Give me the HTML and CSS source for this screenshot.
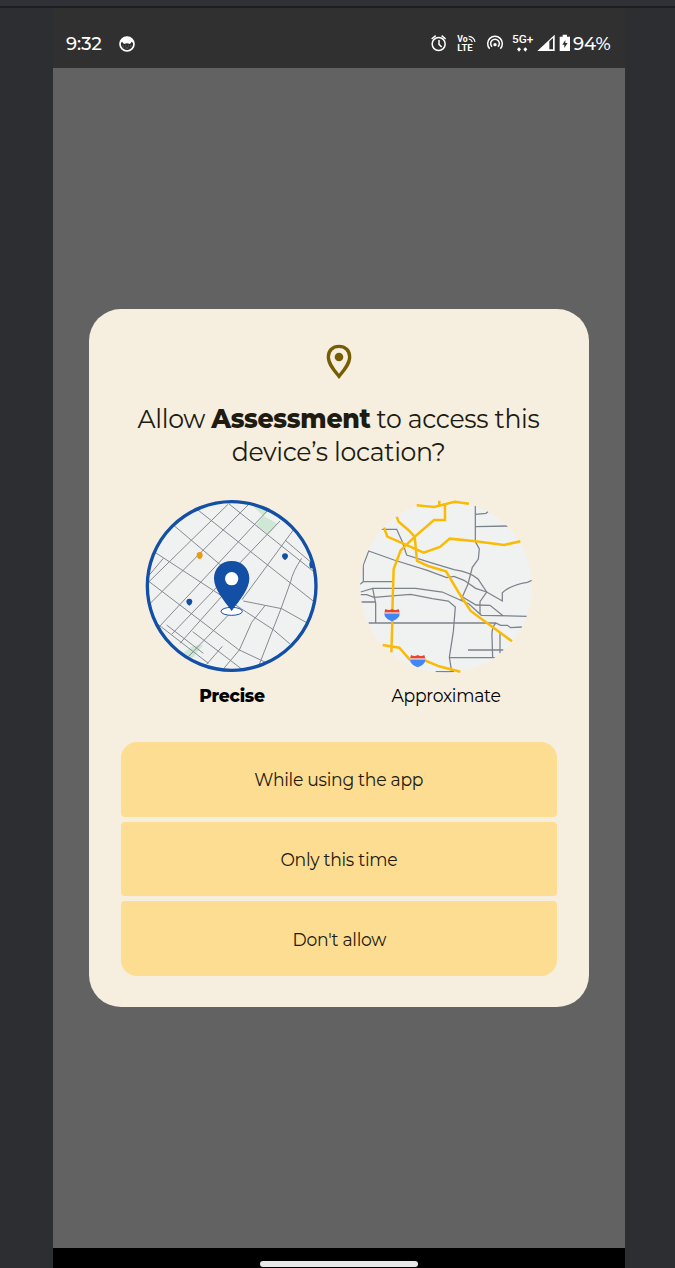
FILE: index.html
```html
<!DOCTYPE html>
<html lang="en">
<head>
<meta charset="utf-8">
<title>Location permission</title>
<link rel="stylesheet" href="styles.css">
</head>
<body>
<div class="phone">
  <header class="status">
    <span class="time">9:32</span>
    <svg class="cat" width="18" height="18" viewBox="0 0 54 54"><circle cx="27" cy="27" r="21" fill="#303030" stroke="#fff" stroke-width="5"/><path d="M8 25Q10 6 27 5Q44 6 46 25L41 20L36 27Q27 23 18 27L12 20Z" fill="#fff"/><path d="M14 33h3M37 33h3M14 39h3M21 33h2M31 33h2M25 39h4" stroke="#888" stroke-width="3"/></svg>
    <div class="icons">
      <svg width="18" height="20" viewBox="29 42 54 60" fill="none" stroke="#fff" stroke-width="4.5"><circle cx="55" cy="72" r="19.5"/><path d="M56 60v13l8 8M34 57l12-10M64 47l12 10"/></svg>
      <svg class="volte" width="20" height="20" viewBox="112 42 60 60"><text x="113" y="66" class="tiny" textLength="31" lengthAdjust="spacingAndGlyphs">Vo</text><text x="113" y="92" class="tiny" textLength="46" lengthAdjust="spacingAndGlyphs">LTE</text><path d="M147 49Q163 50 166 66M147 57Q155 58 158 66" fill="none" stroke="#fff" stroke-width="3.5"/></svg>
      <svg class="hotspot" width="18" height="20" viewBox="198 42 54 60" fill="none" stroke="#fff" stroke-width="4.5"><path d="M209 86A22 22 0 1 1 241 86M216 80A13 13 0 1 1 234 80"/><circle cx="225" cy="74" r="5" fill="#fff" stroke="none"/></svg>
      <svg class="net" width="22" height="24" viewBox="278 36 66 72"><text x="278" y="70" class="five" textLength="64" lengthAdjust="spacingAndGlyphs">5G+</text><path d="M293 88l6-6 6 6-6 7zM312 88l6-6 6 6-6 7z" fill="#fff"/></svg>
      <svg class="signal" width="18" height="20" viewBox="350 42 54 60"><path d="M351 93L403 44V93Z" fill="#fff"/><path d="M387 64L398 54V88H387Z" fill="#303030"/></svg>
      <svg class="battery" width="12" height="20" viewBox="419 42 36 60"><path d="M430 44h13v6h9v43h-31V50h9z" fill="#fff"/><path d="M438 60l-9 14h6v10l10-15h-7z" fill="#303030"/></svg>
      <span class="pct">94%</span>
    </div>
  </header>
  <main class="scrim">
    <section class="card">
      <svg class="pin" width="26" height="36" viewBox="0 0 78 108"><path d="M39 7C20 7 7 20 7 39C7 60 25 80 39 97C53 80 71 60 71 39C71 20 58 7 39 7Z" fill="none" stroke="#765d00" stroke-width="10"/><circle cx="39" cy="39" r="13" fill="#765d00"/></svg>
      <h1>Allow <b>Assessment</b> to access this<br>device’s location?</h1>
      <div class="maps">
        <figure>
          <svg width="184" height="184" viewBox="0 0 552 552">
            <defs><clipPath id="c1"><circle cx="275" cy="273" r="254"/></clipPath></defs>
            <g clip-path="url(#c1)">
              <rect width="552" height="552" fill="#f0f2f1"/>
              <path d="M340 36Q365 36 384 50L370 62L412 86L386 118L348 90L370 62ZM130 475Q155 447 190 450L155 492Z" fill="#cee8d5"/>
              <g fill="none" stroke="#868990" stroke-width="3">
                <path d="M170 42L522 320M266 26L525 233M100 90L250 217M45 172L400 404L450 447M25 258L296 464L385 506M50 385L205 505M80 390L190 475M158 410L305 522M310 318L425 341L500 383M435 135L520 208"/>
                <path d="M264 28L25 262M324 30L30 326M384 45L58 395M420 78L95 418M460 105L306 314M262 285L120 445M275 350L145 485M247 454L200 508M375 332L335 382L298 465L250 522M485 190Q458 230 452 260L423 341L398 405L358 508M70 190L28 240"/>
              </g>
              <ellipse cx="515" cy="209" rx="7" ry="11" fill="#124fa5"/>
            </g>
            <circle cx="275" cy="273" r="253" fill="none" stroke="#124fa5" stroke-width="10"/>
            <path d="M170 181a9 10 0 1 1 18 0q0 8-9 12q-9-4-9-12" fill="#ef990c"/>
            <path d="M426 184a9 9 0 1 1 18 0q0 7-9 12q-9-5-9-12M139 320a9 9 0 1 1 18 0q0 7-9 12q-9-5-9-12" fill="#124fa5"/>
            <ellipse cx="275" cy="349" rx="32" ry="12" fill="#fff" stroke="#124fa5" stroke-width="3"/>
            <path d="M275 198C244 198 222 220 222 250C222 282 249 313 275 348C301 313 328 282 328 250C328 220 306 198 275 198Z" fill="#124fa5"/><circle cx="275" cy="251" r="20" fill="#fff"/>
          </svg>
          <figcaption class="precise">Precise</figcaption>
        </figure>
        <figure>
          <svg width="184" height="184" viewBox="0 0 552 552">
            <defs><clipPath id="c2"><circle cx="276" cy="275" r="258"/></clipPath></defs>
            <circle cx="276" cy="275" r="258" fill="#f0f2f1"/>
            <g clip-path="url(#c2)" fill="none" stroke="#7d838b" stroke-width="3.8">
              <path d="M364 30V140L376 162L373 192L355 217L342 267L320 317M364 58L396 55L404 48M364 95L463 93M82 103H128L144 138L158 180L230 203L300 224Q350 232 372 252L398 291L378 320V358"/>
              <path d="M28 260V210L44 168L120 195L220 226L278 248L300 244L330 256L365 280L398 291L445 318V293Q470 270 520 262L534 256M18 268L28 260H116M20 291L56 280H185L265 291L345 327L382 361L520 364M20 299H38L60 307L170 298L235 311L283 318L304 336L298 410L286 487L293 530M56 280L65 325V383M22 321H64M44 384H425L440 391L460 391L470 398L505 396M425 384Q412 400 414 425L416 490M438 413V475M342 465H448M286 488H424M325 305L366 330L408 331L447 362M245 530H300"/>
            </g>
            <g fill="none" stroke="#fabb05" stroke-width="7.5">
              <path d="M188 31L240 36L302 20L345 26M256 17V32M273 30V75H240L180 127L140 166L119 222L115 350V383L112 472M128 65L134 80L163 105L182 125L189 198L222 213L276 229L313 291L350 348L474 439M90 98L100 125L153 148L209 173L258 156L287 131L365 139L450 150L499 139M86 450L136 458L169 496M210 495L255 514L319 530"/>
            </g>
            <g id="shield"><path d="M91 354H137Q138 370 114 379Q90 370 91 354Z" fill="#4285f4"/><path d="M91 353L94 342Q105 348 114 342Q124 348 134 342L137 353Z" fill="#ea4335"/><path d="M91 354H137" stroke="#f5efe4" stroke-width="3"/></g>
            <use href="#shield" x="77" y="138"/>
          </svg>
          <figcaption>Approximate</figcaption>
        </figure>
      </div>
      <div class="actions">
        <button><span class="label">While using the app</span></button>
        <button><span class="label">Only this time</span></button>
        <button><span class="label">Don't allow</span></button>
      </div>
    </section>
  </main>
  <footer class="nav"><div class="handle"></div></footer>
</div>
</body>
</html>
```
FILE: styles.css
```css
* { box-sizing: border-box; }
body { margin: 0; height: 1268px; background: #2d2e32; border-top: 6px solid #303136; font-family: Montserrat, Lato, "Open Sans", sans-serif; overflow: hidden; }
.phone { width: 100%; height: 1262px; padding: 0 50px 0 53px; border-top: 2px solid #1d1e20; display: flex; flex-direction: column; }
.status { height: 60px; flex: none; background: #303030; color: #fff; display: flex; align-items: center; padding: 11px 14px 0 13px; }
.time { font-size: 18px; font-weight: 500; width: 52px; white-space: nowrap; }
.icons { margin-left: auto; display: flex; align-items: center; }
.volte { margin-left: 9px; }
.hotspot { margin-left: 9px; }
.net { margin-left: 8px; }
.signal { margin-left: 3px; }
.battery { margin-left: 4px; }
.pct { width: 38px; margin-left: 2px; font-size: 18px; font-weight: 500; white-space: nowrap; }
.tiny { font: bold 27px Roboto, sans-serif; fill: #fff; }
.five { font: 500 33px Roboto, sans-serif; fill: #fff; }
.scrim { height: 1180px; flex: none; background: #626262; padding: 241px 36px 0; }
.card { height: 698px; background: #f6efe0; border-radius: 32px; padding: 35px 32px 0; display: flex; flex-direction: column; align-items: center; color: #201b10; }
.pin { display: block; flex: none; }
h1 { margin: 22px 0 0; font-size: 26.5px; line-height: 33px; font-weight: 450; text-align: center; white-space: nowrap; letter-spacing: -.35px; transform: scaleX(.95); }
h1 b { font-weight: 800; }
.maps { display: flex; gap: 30px; margin-top: 27px; }
figure { margin: 0; width: 184px; text-align: center; }
figure svg { display: block; }
figcaption { font-size: 18.5px; font-weight: 450; line-height: 24px; margin-top: 5px; color: #000; letter-spacing: -.3px; transform: scaleX(.93); }
.precise { font-weight: 800; }
.actions { width: 436px; margin-top: 34px; display: grid; gap: 5px; }
button { height: 74.67px; border: 0; border-radius: 4px; background: #fddd92; color: #201b10; font: 450 18.5px Montserrat, Lato, "Open Sans", sans-serif; letter-spacing: -.3px; padding: 1px 0 0; }
.label { display: inline-block; transform: scaleX(.93); }
button:first-child { border-radius: 16px 16px 4px 4px; }
button:last-child { border-radius: 4px 4px 16px 16px; }
.nav { height: 20px; flex: none; background: #000; padding-top: 13px; }
.handle { width: 158px; height: 6px; margin: 0 auto; border-radius: 3px; background: #e8e8e8; }
```
